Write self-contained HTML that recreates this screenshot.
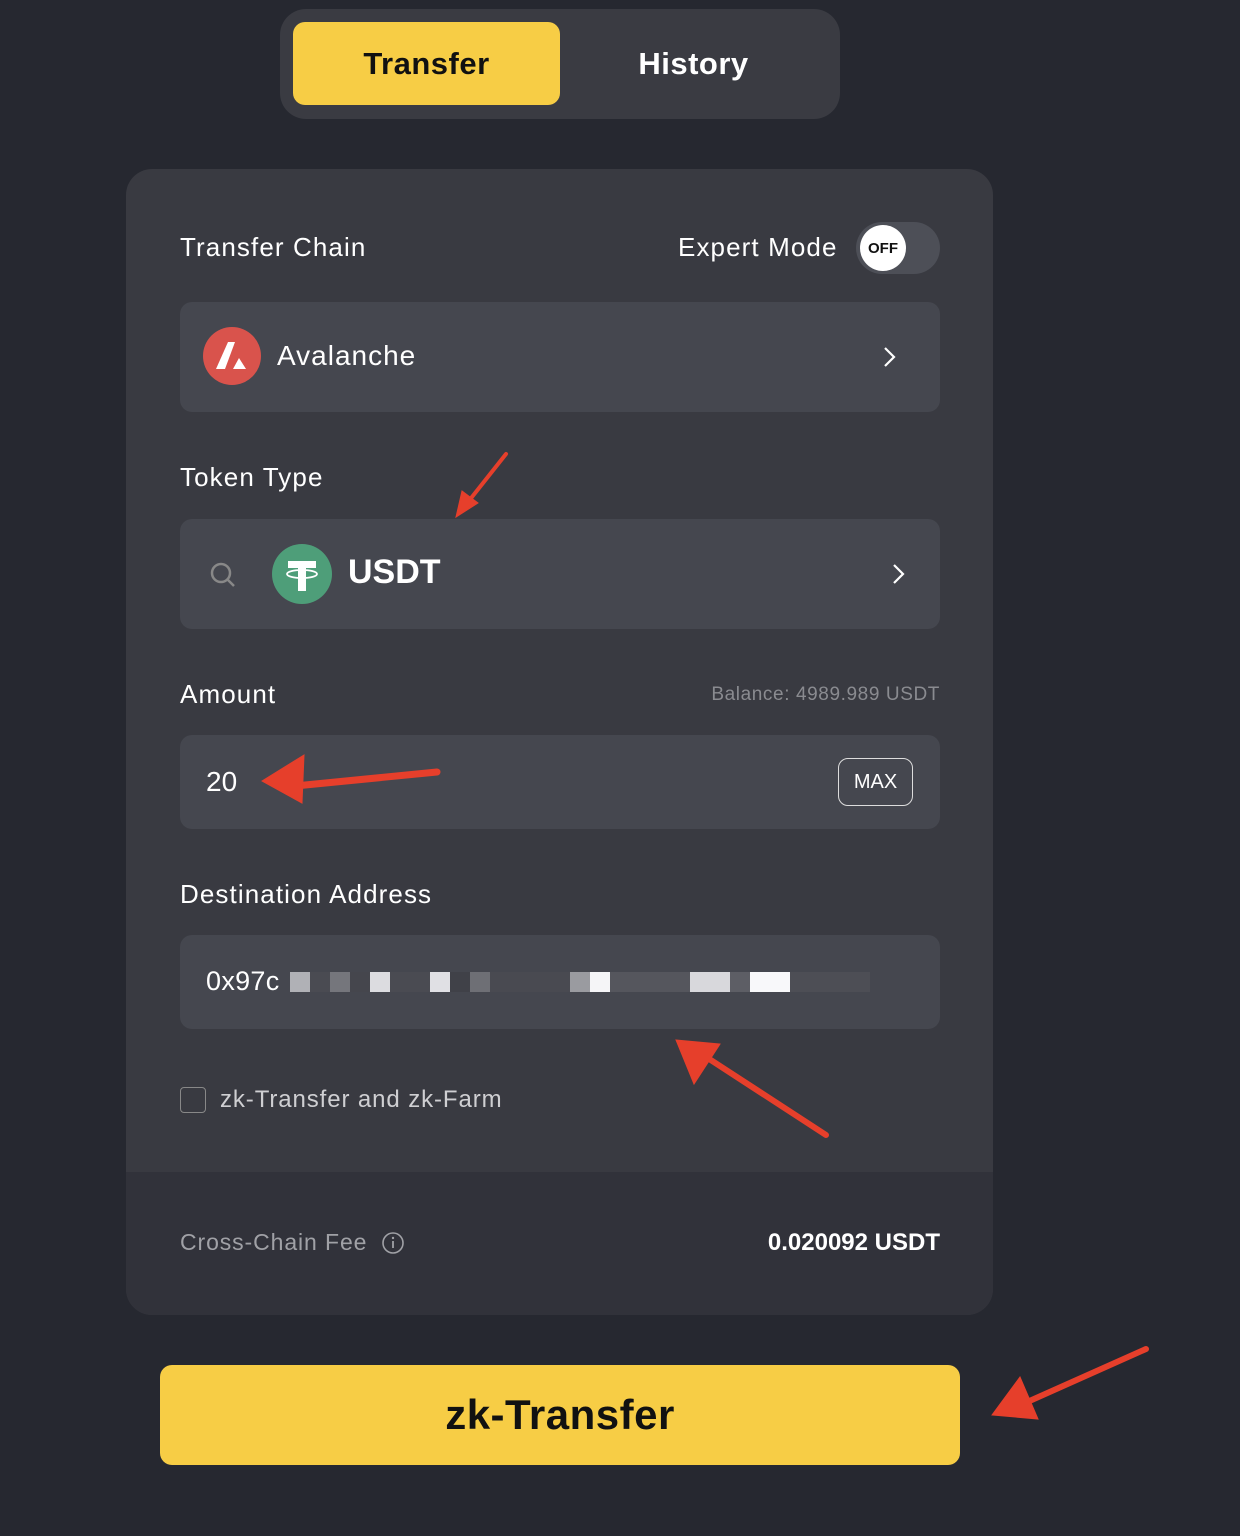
<!DOCTYPE html>
<html><head><meta charset="utf-8"><style>
*{margin:0;padding:0;box-sizing:border-box}
body{width:1240px;height:1536px;background:#262830;font-family:"Liberation Sans",sans-serif;color:#fff;position:relative;overflow:hidden}
.abs{position:absolute}
.tabs{left:280px;top:9px;width:560px;height:110px;background:#3a3b42;border-radius:26px}
.tab1{left:293px;top:22px;width:267px;height:83px;background:#f7cd45;border-radius:12px;color:#111;font-weight:bold;font-size:31px;display:flex;align-items:center;justify-content:center;letter-spacing:0.5px}
.tab2{left:560px;top:22px;width:267px;height:83px;color:#fff;font-weight:bold;font-size:31px;display:flex;align-items:center;justify-content:center;letter-spacing:0.5px}
.card{left:126px;top:169px;width:867px;height:1146px;background:#393a41;border-radius:26px;overflow:hidden}
.foot{left:0;top:1003px;width:867px;height:143px;background:#31323a}
.lbl{font-size:26px;color:#fff;letter-spacing:1.1px}
.field{left:180px;width:760px;background:#45474f;border-radius:12px}
</style></head><body>
<div class="abs tabs"></div>
<div class="abs tab1">Transfer</div>
<div class="abs tab2">History</div>
<div class="abs card"><div class="abs foot"></div></div>

<div class="abs lbl" style="left:180px;top:232px">Transfer Chain</div>
<div class="abs lbl" style="left:678px;top:232px">Expert Mode</div>
<div class="abs" style="left:856px;top:222px;width:84px;height:52px;background:#4d4f57;border-radius:26px"></div>
<div class="abs" style="left:860px;top:225px;width:46px;height:46px;background:#fff;border-radius:50%;color:#111;font-size:15px;font-weight:bold;display:flex;align-items:center;justify-content:center">OFF</div>

<div class="abs field" style="top:302px;height:110px"></div>
<svg class="abs" style="left:203px;top:327px" width="58" height="58" viewBox="0 0 58 58"><circle cx="29" cy="29" r="29" fill="#d9534c"/><path d="M25 15h7l-10 27h-9z" fill="#fff"/><path d="M36 31l7 11h-13z" fill="#fff"/></svg>
<div class="abs" style="left:277px;top:340px;font-size:28px;letter-spacing:1px">Avalanche</div>
<svg class="abs" style="left:880px;top:345px" width="18" height="24"><path d="M5 3l9 9-9 9" stroke="#fff" stroke-width="2.2" fill="none"/></svg>

<div class="abs lbl" style="left:180px;top:462px">Token Type</div>
<div class="abs field" style="top:519px;height:110px"></div>
<svg class="abs" style="left:208px;top:560px" width="30" height="30"><circle cx="13" cy="13" r="9" stroke="#888" stroke-width="2.5" fill="none"/><path d="M20 20l6 6" stroke="#888" stroke-width="2.5"/></svg>
<svg class="abs" style="left:272px;top:544px" width="60" height="60" viewBox="0 0 60 60"><circle cx="30" cy="30" r="30" fill="#4e9e79"/><rect x="16" y="17" width="28" height="7" fill="#fff"/><rect x="26" y="17" width="8" height="30" fill="#fff"/><ellipse cx="30" cy="30" rx="15" ry="4" stroke="#fff" stroke-width="1.8" fill="none"/></svg>
<div class="abs" style="left:348px;top:553px;font-size:34px;font-weight:bold">USDT</div>
<svg class="abs" style="left:889px;top:562px" width="18" height="24"><path d="M5 3l9 9-9 9" stroke="#fff" stroke-width="2.2" fill="none"/></svg>

<div class="abs lbl" style="left:180px;top:679px">Amount</div>
<div class="abs" style="left:640px;top:684px;font-size:19px;color:#8a8b90;width:300px;text-align:right;letter-spacing:0.6px">Balance: 4989.989 USDT</div>
<div class="abs field" style="top:735px;height:94px"></div>
<div class="abs" style="left:206px;top:766px;font-size:28px">20</div>
<div class="abs" style="left:838px;top:758px;width:75px;height:48px;border:1.5px solid #ddd;border-radius:10px;font-size:20px;display:flex;align-items:center;justify-content:center">MAX</div>

<div class="abs lbl" style="left:180px;top:879px">Destination Address</div>
<div class="abs field" style="top:935px;height:94px"></div>
<div class="abs" style="left:206px;top:966px;font-size:27px;letter-spacing:0.3px">0x97c</div>
<div class="abs" style="left:290px;top:972px;width:580px;height:20px;background:linear-gradient(90deg,#b0b1b6 0 20px,#4a4b52 20px 40px,#75767c 40px 60px,#45464d 60px 80px,#dcdce0 80px 100px,#4a4b52 100px 140px,#e0e0e4 140px 160px,#404148 160px 180px,#6e6f75 180px 200px,#494a51 200px 280px,#9a9ba0 280px 300px,#f5f5f7 300px 320px,#55565d 320px 400px,#d8d8dc 400px 440px,#5d5e65 440px 460px,#f8f8fa 460px 500px,#4d4e55 500px 580px)"></div>

<div class="abs" style="left:180px;top:1087px;width:26px;height:26px;border:1.5px solid #888;border-radius:4px"></div>
<div class="abs" style="left:220px;top:1086px;font-size:24px;color:#cfcfd2;letter-spacing:0.9px">zk-Transfer and zk-Farm</div>

<div class="abs" style="left:180px;top:1229px;font-size:23px;color:#a0a1a6;letter-spacing:0.9px">Cross-Chain Fee</div>
<svg class="abs" style="left:381px;top:1231px" width="24" height="24"><circle cx="12" cy="12" r="10" stroke="#a0a1a6" stroke-width="1.6" fill="none"/><path d="M12 10v7" stroke="#a0a1a6" stroke-width="1.8"/><circle cx="12" cy="7" r="1.2" fill="#a0a1a6"/></svg>
<div class="abs" style="left:640px;top:1229px;width:300px;text-align:right;font-size:24px;font-weight:bold">0.020092 USDT</div>

<div class="abs" style="left:160px;top:1365px;width:800px;height:100px;background:#f7cd45;border-radius:12px;color:#111;font-size:42px;font-weight:bold;display:flex;align-items:center;justify-content:center;letter-spacing:0.5px">zk-Transfer</div>

<svg class="abs" style="left:0;top:0" width="1240" height="1536">
<g fill="#e63f2b" stroke="#e63f2b" stroke-linecap="round">
<path d="M506 454L468 502" stroke-width="4"/><path d="M456 517l6-26 16 12z"/>
<path d="M437 772L295 786" stroke-width="7"/><path d="M262 781l42-26 -2 48z"/>
<path d="M826 1135L700 1053" stroke-width="6"/><path d="M676 1040l44 4 -26 40z"/>
<path d="M1146 1349L1025 1403" stroke-width="6"/><path d="M992 1415l28-38 18 42z"/>
</g></svg>
</body></html>
